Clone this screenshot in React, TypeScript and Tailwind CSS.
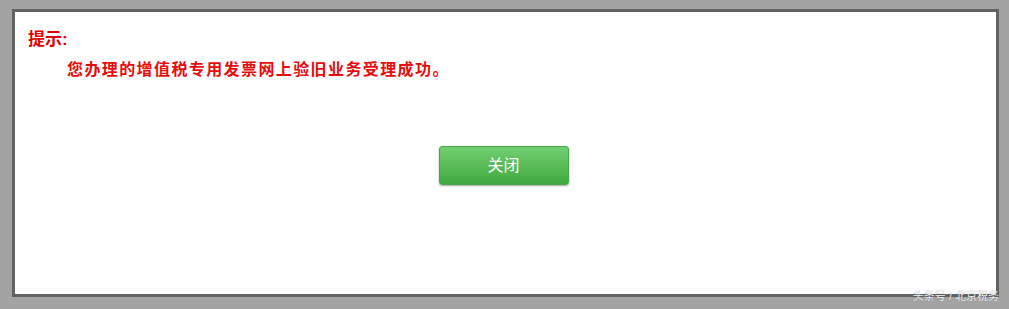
import React from 'react';

const App: React.FC = () => {
  return (
    <div
      className="relative w-[1009px] h-[309px] bg-[#a3a3a3] pt-[9px] pl-[12px]"
      style={{ fontFamily: '"Liberation Sans", "Noto Sans CJK SC", sans-serif' }}
    >
      <div className="w-[987px] h-[288px] border-[3px] border-[#626262] bg-white flex flex-col">
        <div className="pl-[13px] pt-[17px]">
          <p className="text-[17px] leading-[22px] font-bold text-[#e10000]">提示:</p>
          <p className="pl-[39px] mt-[9px] text-[16px] leading-[20px] font-bold tracking-[1.4px] text-[#e80c0c]">
            您办理的增值税专用发票网上验旧业务受理成功。
          </p>
        </div>

        <div className="flex justify-center pt-[66px] pr-[4px]">
          <button
            type="button"
            className="w-[130px] h-[39px] rounded-[3px] border border-[#46a646] bg-gradient-to-b from-[#72cf70] to-[#3ea93f] text-white text-[16px] shadow-[0_1px_2px_rgba(0,0,0,0.35)]"
          >
            关闭
          </button>
        </div>
      </div>

      <span className="absolute right-[10px] bottom-[6px] text-[11px] leading-[13px] text-[#f2f2f2] [text-shadow:0_0_1px_rgba(0,0,0,0.3)]">
        头条号 / 北京税务
      </span>
    </div>
  );
};

export default App;
